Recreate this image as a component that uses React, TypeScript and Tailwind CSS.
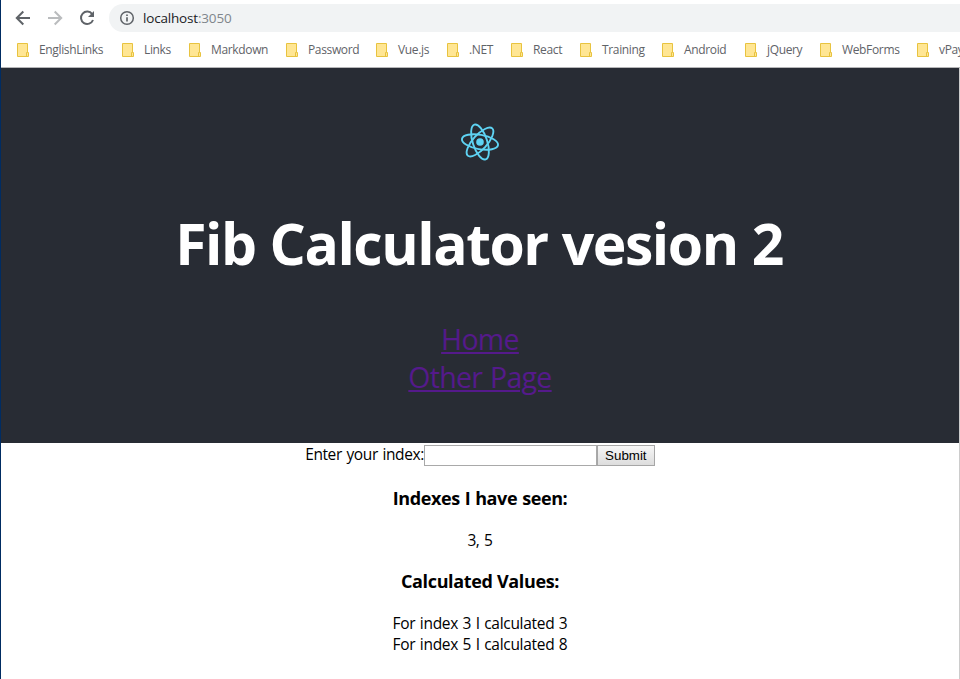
import React from "react";

const bookmarks = [
  { name: "EnglishLinks", width: "w-[105px]" },
  { name: "Links", width: "w-[67px]" },
  { name: "Markdown", width: "w-[97px]" },
  { name: "Password", width: "w-[90px]" },
  { name: "Vue.js", width: "w-[71px]" },
  { name: ".NET", width: "w-[64px]" },
  { name: "React", width: "w-[69px]" },
  { name: "Training", width: "w-[82px]" },
  { name: "Android", width: "w-[83px]" },
  { name: "jQuery", width: "w-[75px]" },
  { name: "WebForms", width: "w-[97px]" },
  { name: "vPay", width: "w-[60px]" },
];

function Folder() {
  return (
    <svg width="12" height="14" viewBox="0 0 12 14" className="mr-[10px] shrink-0">
      <path d="M.5.5h10v9h1v4H.5z" fill="#ffe694" stroke="#e8c33f" />
      <path d="M9.5 13V9.5h1" fill="none" stroke="#e8c33f" />
    </svg>
  );
}

function BrowserBar() {
  return (
    <div className="h-[67px] overflow-hidden bg-white">
      <div className="flex h-[36px] items-center pl-[14px]">
        <svg width="16" height="16" viewBox="0 0 16 16" fill="none" stroke="#5f6368" strokeWidth="2">
          <path d="M15 8H2.5M8.3 1.5L1.8 8l6.5 6.5" />
        </svg>
        <svg width="16" height="16" viewBox="0 0 16 16" className="ml-4" fill="none" stroke="#babcbe" strokeWidth="2">
          <path d="M1 8h12.5M7.7 1.5L14.2 8l-6.5 6.5" />
        </svg>
        <svg width="16" height="16" viewBox="0 0 16 16" className="ml-4" fill="none">
          <path d="M13.2 4.1A6.2 6.2 0 1 0 14 10" stroke="#5f6368" strokeWidth="2" />
          <path d="M15 1v6H9z" fill="#5f6368" />
        </svg>
        <div className="ml-[14px] flex h-7 flex-1 items-center rounded-l-full bg-[#f1f3f4] pl-[10px]">
          <svg width="16" height="16" viewBox="0 0 16 16" className="mr-2" fill="none" stroke="#5f6368">
            <circle cx="8" cy="8" r="6.3" strokeWidth="1.5" />
            <path d="M8 7.2v4.2M8 4.4v1.7" strokeWidth="1.7" />
          </svg>
          <span className="text-[13.5px] tracking-[-0.18px] whitespace-nowrap text-[#202124]">
            localhost<span className="text-[#80868b]">:3050</span>
          </span>
        </div>
      </div>
      <div className="flex h-[28px] items-center pl-4">
        {bookmarks.map((b) => (
          <div key={b.name} className={`flex shrink-0 items-center ${b.width}`}>
            <Folder />
            <span className="text-[12px] tracking-[-0.35px] whitespace-nowrap text-[#5f6368]">{b.name}</span>
          </div>
        ))}
      </div>
    </div>
  );
}

function ReactLogo() {
  return (
    <svg width="40" height="40" viewBox="-20 -20 40 40" fill="none" stroke="#5ed3f3" strokeWidth="1.9">
      <ellipse rx="18.3" ry="7.2" transform="rotate(10)" />
      <ellipse rx="18.3" ry="7.2" transform="rotate(72)" />
      <ellipse rx="18.3" ry="7.2" transform="rotate(132)" />
      <circle r="3.8" fill="#5ed3f3" stroke="none" />
    </svg>
  );
}

export default function App() {
  return (
    <div className="flex h-[679px] w-[960px] overflow-hidden bg-white font-['Open_Sans','Noto_Sans',sans-serif] text-black">
      <div className="w-px bg-[#002c62]" />
      <div className="flex min-w-0 flex-1 flex-col">
        <BrowserBar />
        <div className="h-px bg-[#b6b6b8]" />
        <div className="flex flex-1 border-r border-[#cccccc]">
          <div className="flex-1 text-center">
            <header className="flex h-[375px] flex-col items-center bg-[#282c34] pt-[54px]">
              <ReactLogo />
              <h1 className="mt-[42px] mr-[2px] h-[78px] text-[57px] leading-[78px] font-bold tracking-[-1.45px] whitespace-nowrap text-white [word-spacing:0.7px]">
                Fib Calculator vesion 2
              </h1>
              <nav className="mt-[38px] flex flex-col items-center text-[28.5px] leading-[38px] tracking-[-0.7px] text-[#551a8b] [word-spacing:1px]">
                <a className="underline decoration-2 underline-offset-[2px]">Home</a>
                <a className="underline decoration-2 underline-offset-[2px]">Other Page</a>
              </nav>
            </header>
            <form className="mt-[2px] flex h-[21px] items-center justify-center">
              <label className="-mt-0.5 text-[15.5px] leading-[21px] tracking-[-0.4px] [word-spacing:1px]">
                Enter your index:
              </label>
              <input className="h-[21px] w-[173px] border border-[#a9a9a9] bg-white" />
              <button
                type="button"
                className="h-[21px] w-[58px] border border-[#a6a6a6] bg-linear-to-b from-[#f6f6f6] to-[#dddddd] font-['Liberation_Sans',Arial,sans-serif] text-[13.33px] leading-[18px]"
              >
                Submit
              </button>
            </form>
            <h3 className="mt-[20px] text-[18px] leading-[25px] font-bold tracking-[-0.4px] [word-spacing:0.7px]">
              Indexes I have seen:
            </h3>
            <p className="mt-[19px] text-[15.5px] leading-[21px] tracking-[-0.4px] [word-spacing:1px]">3, 5</p>
            <h3 className="mt-[18px] text-[18px] leading-[25px] font-bold tracking-[-0.35px]">Calculated Values:</h3>
            <div className="mt-[19px] text-[15.5px] leading-[21px] tracking-[-0.3px] [word-spacing:0.8px]">
              <p>For index 3 I calculated 3</p>
              <p>For index 5 I calculated 8</p>
            </div>
          </div>
        </div>
      </div>
    </div>
  );
}
